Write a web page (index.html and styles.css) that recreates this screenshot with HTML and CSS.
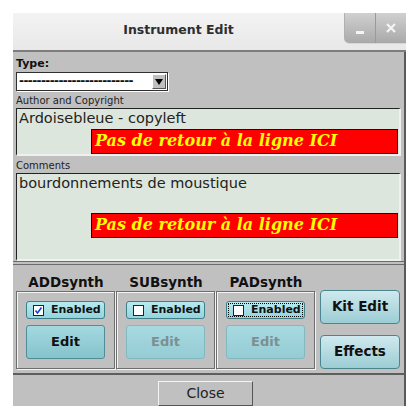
FILE: index.html
```html
<!DOCTYPE html>
<html lang="fr">
<head>
  <meta charset="UTF-8">
  <title>Instrument Edit</title>
  <link rel="stylesheet" href="styles.css">
</head>
<body>

<div class="window">
  <div class="titlebar">
    <span class="title">Instrument Edit</span>
    <div class="wm-buttons">
      <div class="wm-btn"><span class="wm-min"></span></div>
      <div class="wm-btn">
        <svg width="12" height="12" viewBox="0 0 12 12"><path d="M2 2 L10 10 M10 2 L2 10" stroke="#f4f4f4" stroke-width="2.2"/></svg>
      </div>
    </div>
  </div>

  <div class="content">
    <div class="info-group">
      <div class="type-label">Type:</div>
      <div class="select">
        <span class="select-text">--------------------------</span>
        <span class="select-btn"><span class="arrow"></span></span>
      </div>

      <div class="small-label">Author and Copyright</div>
      <div class="field author">
        <div class="field-text">Ardoisebleue - copyleft</div>
        <div class="warn">Pas de retour à la ligne ICI</div>
      </div>

      <div class="small-label">Comments</div>
      <div class="field comments">
        <div class="field-text">bourdonnements de moustique</div>
        <div class="warn">Pas de retour à la ligne ICI</div>
      </div>
    </div>

    <div class="synth-group">
      <div class="synth-col">
        <div class="synth-title">ADDsynth</div>
        <div class="synth-panel">
          <div class="enable-btn"><span class="check on">
            <svg width="9" height="9" viewBox="0 0 9 9"><path d="M1.5 4.5 L3.5 7 L7.5 1.5" stroke="#1a3fd0" stroke-width="1.6" fill="none"/></svg>
          </span>Enabled</div>
          <div class="edit-btn">Edit</div>
        </div>
      </div>
      <div class="synth-col">
        <div class="synth-title">SUBsynth</div>
        <div class="synth-panel">
          <div class="enable-btn"><span class="check"></span>Enabled</div>
          <div class="edit-btn off">Edit</div>
        </div>
      </div>
      <div class="synth-col">
        <div class="synth-title">PADsynth</div>
        <div class="synth-panel">
          <div class="enable-btn focus"><span class="check"></span>Enabled</div>
          <div class="edit-btn off">Edit</div>
        </div>
      </div>
      <div class="side-col">
        <div class="big-btn">Kit Edit</div>
        <div class="big-btn">Effects</div>
      </div>
    </div>

    <div class="footer">
      <div class="close-btn">Close</div>
    </div>
  </div>
</div>

</body>
</html>
```

FILE: styles.css
```css
body {
  margin: 0;
  background: #fff;
  font-family: 'DejaVu Sans', sans-serif;
  color: #111;
}
.window {
  margin: 13px 0 0 13px;
  width: 393px;
  height: 393px;
  display: flex;
  flex-direction: column;
}
.titlebar {
  height: 37px;
  background: linear-gradient(#f3f3f3, #e8e8e8);
  border-bottom: 2px solid #7d7d7d;
  display: flex;
  align-items: flex-start;
}
.title {
  flex: 1;
  text-align: center;
  font-weight: bold;
  font-size: 12.5px;
  color: #2e2e2e;
  line-height: 34px;
}
.wm-buttons {
  display: flex;
  height: 30px;
  border-radius: 0 0 0 5px;
  overflow: hidden;
  box-shadow: 0 1px 0 #d6d6d6;
}
.wm-btn {
  width: 30px;
  height: 30px;
  background: linear-gradient(#d0d0d0, #a9a9a9);
  border-left: 1px solid #9a9a9a;
  display: flex;
  align-items: center;
  justify-content: center;
}
.wm-btn:first-child {
  border-left: 1px solid #b0b0b0;
}
.wm-min {
  width: 8px;
  height: 3px;
  background: #f4f4f4;
  margin-top: 8px;
}
.content {
  flex: 1;
  background: #c0c0c0;
  border-right: 2px solid #5a5a5a;
  display: flex;
  flex-direction: column;
}

/* top part */
.info-group {
  padding: 4px 4px 0 3px;
  height: 210px;
  border-bottom: 1px solid #6a6a6a;
  box-sizing: border-box;
}
.type-label {
  font-size: 11px;
  font-weight: bold;
  line-height: 13px;
  margin-top: 1px;
}
.select {
  width: 152px;
  height: 19px;
  margin-top: 2px;
  background: #fff;
  border: 1px solid #303030;
  box-shadow: 1px 1px 0 #fff;
  box-sizing: border-box;
  display: flex;
  align-items: center;
}
.select-text {
  flex: 1;
  font-size: 12px;
  font-weight: bold;
  padding-left: 2px;
  line-height: 15px;
  overflow: hidden;
  letter-spacing: -0.6px;
}
.select-btn {
  width: 14px;
  height: 15px;
  margin-right: 1px;
  background: #c0c0c0;
  border: 1px solid;
  border-color: #fff #555 #555 #fff;
  box-sizing: border-box;
  display: flex;
  align-items: center;
  justify-content: center;
}
.arrow {
  width: 0;
  height: 0;
  border-left: 4px solid transparent;
  border-right: 4px solid transparent;
  border-top: 6px solid #000;
}
.small-label {
  font-size: 10px;
  color: #222;
  line-height: 12px;
  margin-top: 4px;
}
.field {
  background: #dde6dc;
  border: 2px solid;
  border-color: #222 #f0f0f0 #f0f0f0 #222;
  border-width: 1px 2px 2px 1px;
  box-sizing: border-box;
  width: 385px;
  padding: 0 1px 0 2px;
}
.author {
  height: 48px;
  margin-top: 1px;
}
.comments {
  height: 88px;
  margin-top: 1px;
}
.field-text {
  font-size: 14.5px;
  line-height: 19px;
  color: #222;
}
.warn {
  margin-left: 72px;
  height: 25px;
  background: #ff0000;
  border: 1px solid #111;
  box-sizing: border-box;
  color: #ffff00;
  font-family: 'DejaVu Serif', serif;
  font-weight: bold;
  font-style: italic;
  font-size: 16px;
  line-height: 22px;
  padding-left: 3px;
  white-space: nowrap;
}
.author .warn {
  margin-top: 1px;
}
.comments .warn {
  margin-top: 20px;
}

/* synth part */
.synth-group {
  margin-top: 2px;
  border-top: 1px solid #6a6a6a;
  height: 109px;
  display: flex;
  padding: 0 4px 0 3px;
  box-sizing: border-box;
}
.synth-col {
  width: 100px;
  display: flex;
  flex-direction: column;
}
.synth-title {
  font-weight: bold;
  font-size: 13.5px;
  text-align: center;
  line-height: 16px;
  padding: 9px 0 1px;
}
.synth-panel {
  height: 78px;
  border: 1px solid #6e6e6e;
  box-shadow: inset 1px 1px 0 #f4f4f4, 1px 1px 0 #f4f4f4;
  margin-right: 1px;
  display: flex;
  flex-direction: column;
  align-items: center;
  padding-top: 9px;
  box-sizing: border-box;
}
.enable-btn {
  width: 79px;
  height: 18px;
  box-sizing: border-box;
  border: 1px solid #3f7f88;
  border-radius: 3px;
  background: linear-gradient(#b8eaf0, #93d4de);
  font-size: 11px;
  font-weight: bold;
  display: flex;
  align-items: center;
  padding-left: 6px;
  gap: 7px;
  line-height: 14px;
}
.enable-btn.focus {
  outline: 1px dotted #000;
  outline-offset: -3px;
}
.check {
  width: 9px;
  height: 9px;
  background: #fff;
  border: 1px solid #222;
  display: flex;
}
.edit-btn {
  width: 79px;
  height: 34px;
  margin-top: 6px;
  box-sizing: border-box;
  border: 1px solid #4d8e98;
  border-radius: 3px;
  background: linear-gradient(#a4d8e0, #86c3cc);
  font-size: 13px;
  font-weight: bold;
  text-align: center;
  line-height: 31px;
}
.edit-btn.off {
  border-color: #82b9c1;
  background: linear-gradient(#a8d9e0, #95ccd4);
  color: #7c8f92;
}
.side-col {
  flex: 1;
  display: flex;
  flex-direction: column;
  align-items: flex-end;
  padding-top: 25px;
  gap: 11px;
}
.big-btn {
  width: 80px;
  height: 34px;
  box-sizing: border-box;
  border: 1px solid #4b8690;
  border-radius: 4px;
  background: linear-gradient(#cfe9ee, #9ccdd4);
  font-size: 13.5px;
  font-weight: bold;
  text-align: center;
  line-height: 31px;
}

/* footer */
.footer {
  flex: 1;
  border-top: 2px solid #5e5e5e;
  display: flex;
  justify-content: center;
  align-items: flex-end;
  padding-right: 6px;
}
.close-btn {
  width: 95px;
  height: 25px;
  box-sizing: border-box;
  border: 1px solid;
  border-color: #f4f4f4 #555 #555 #f4f4f4;
  font-size: 14px;
  text-align: center;
  line-height: 23px;
  color: #222;
}
```
